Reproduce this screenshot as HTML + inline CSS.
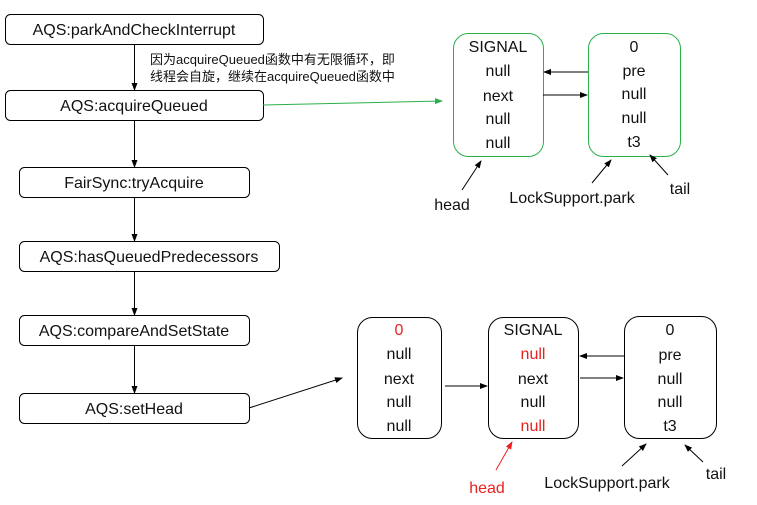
<!DOCTYPE html>
<html><head><meta charset="utf-8"><style>
html,body{margin:0;padding:0;background:#fff;width:757px;height:505px;overflow:hidden}
svg{display:block}
text{font-family:"Liberation Sans","Noto Sans CJK SC",sans-serif;font-size:16px;fill:#111}
.c{text-anchor:middle}
.r{fill:#e8221f}
.z{font-size:13px}
</style></head><body>
<svg width="757" height="505" viewBox="0 0 757 505">
<defs>
<marker id="a" markerWidth="8" markerHeight="8" refX="7" refY="4" orient="auto" markerUnits="userSpaceOnUse"><path d="M0,1 L8,4 L0,7z" fill="#000"/></marker>
<marker id="g" markerWidth="8" markerHeight="8" refX="7" refY="4" orient="auto" markerUnits="userSpaceOnUse"><path d="M0,1 L8,4 L0,7z" fill="#2ab04a"/></marker>
<marker id="rm" markerWidth="8" markerHeight="8" refX="7" refY="4" orient="auto" markerUnits="userSpaceOnUse"><path d="M0,1 L8,4 L0,7z" fill="#e8221f"/></marker>
</defs>
<g fill="#fff" stroke="#000" stroke-width="1">
<rect x="5.5" y="14.5" width="258" height="30" rx="5"/>
<rect x="5.5" y="90.5" width="258" height="30" rx="5"/>
<rect x="19.5" y="167.5" width="230" height="30" rx="5"/>
<rect x="19.5" y="241.5" width="260" height="30" rx="5"/>
<rect x="19.5" y="315.5" width="230" height="30" rx="5"/>
<rect x="19.5" y="393.5" width="230" height="30" rx="5"/>
<rect x="357.5" y="317.5" width="84" height="121" rx="15"/>
<rect x="488.5" y="317.5" width="90" height="121" rx="15"/>
<rect x="624.5" y="316.5" width="92" height="122" rx="15"/>
</g>
<g fill="#fff" stroke="#2ab04a" stroke-width="1">
<rect x="453.5" y="33.5" width="90" height="123" rx="15"/>
<rect x="588.5" y="33.5" width="92" height="123" rx="15"/>
</g>
<g stroke="#000" stroke-width="1" marker-end="url(#a)">
<line x1="134.5" y1="44" x2="134.5" y2="90"/>
<line x1="134.5" y1="120" x2="134.5" y2="167"/>
<line x1="134.5" y1="197" x2="134.5" y2="241"/>
<line x1="134.5" y1="271" x2="134.5" y2="315"/>
<line x1="134.5" y1="345" x2="134.5" y2="393"/>
<line x1="588" y1="72" x2="544" y2="72"/>
<line x1="543" y1="95" x2="587" y2="95"/>
<line x1="462" y1="190" x2="481" y2="161"/>
<line x1="592" y1="183" x2="611" y2="160"/>
<line x1="668" y1="175" x2="650" y2="155"/>
<line x1="249" y1="408" x2="342" y2="378"/>
<line x1="445" y1="386" x2="487" y2="386"/>
<line x1="624" y1="356" x2="580" y2="356"/>
<line x1="580" y1="378" x2="623" y2="378"/>
<line x1="622" y1="466" x2="646" y2="444"/>
<line x1="703" y1="462" x2="685" y2="445"/>
</g>
<line x1="263" y1="105" x2="442" y2="101" stroke="#2ab04a" stroke-width="1" marker-end="url(#g)"/>
<line x1="496" y1="470" x2="512" y2="442" stroke="#e8221f" stroke-width="1" marker-end="url(#rm)"/>
<text class="c" x="134" y="35">AQS:parkAndCheckInterrupt</text>
<text class="c" x="134" y="111">AQS:acquireQueued</text>
<text class="c" x="134" y="188">FairSync:tryAcquire</text>
<text class="c" x="149" y="262">AQS:hasQueuedPredecessors</text>
<text class="c" x="134" y="336">AQS:compareAndSetState</text>
<text class="c" x="134" y="414">AQS:setHead</text>
<text class="z" x="150" y="64">因为acquireQueued函数中有无限循环，即</text>
<text class="z" x="150" y="81">线程会自旋，继续在acquireQueued函数中</text>
<g class="c">
<text class="c" x="498" y="52">SIGNAL</text><text class="c" x="498" y="76">null</text><text class="c" x="498" y="101">next</text><text class="c" x="498" y="124">null</text><text class="c" x="498" y="148">null</text>
<text class="c" x="634" y="52">0</text><text class="c" x="634" y="76">pre</text><text class="c" x="634" y="99">null</text><text class="c" x="634" y="123">null</text><text class="c" x="634" y="147">t3</text>
<text class="c r" x="399" y="335">0</text><text class="c" x="399" y="359">null</text><text class="c" x="399" y="384">next</text><text class="c" x="399" y="407">null</text><text class="c" x="399" y="431">null</text>
<text class="c" x="533" y="335">SIGNAL</text><text class="c r" x="533" y="359">null</text><text class="c" x="533" y="384">next</text><text class="c" x="533" y="407">null</text><text class="c r" x="533" y="431">null</text>
<text class="c" x="670" y="335">0</text><text class="c" x="670" y="360">pre</text><text class="c" x="670" y="384">null</text><text class="c" x="670" y="407">null</text><text class="c" x="670" y="431">t3</text>
</g>
<text class="c" x="452" y="210">head</text>
<text class="c" x="572" y="203">LockSupport.park</text>
<text class="c" x="680" y="194">tail</text>
<text class="c r" x="487" y="493">head</text>
<text class="c" x="607" y="488">LockSupport.park</text>
<text class="c" x="716" y="479">tail</text>
</svg>
</body></html>
